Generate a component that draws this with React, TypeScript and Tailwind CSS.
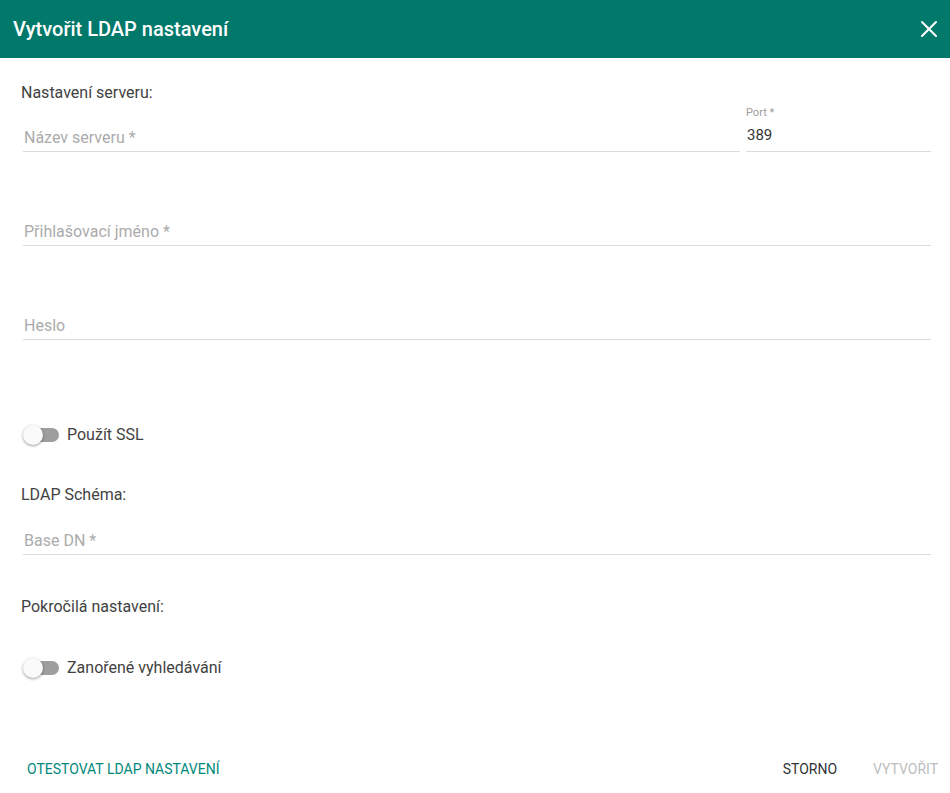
import { X } from "lucide-react";

function Field({
  label,
  value,
  className = "",
}: {
  label: string;
  value?: string;
  className?: string;
}) {
  return (
    <div className={`h-[49px] border-b border-[#dcdcdc] ${className}`}>
      {value ? (
        <>
          <div className="h-[17px] pt-[3px] text-[11px] leading-[14px] text-[#9e9e9e]">{label}</div>
          <div className="h-[31px] pt-[5px] pl-px text-[15px] leading-[20px] text-[#333]">{value}</div>
        </>
      ) : (
        <div className="pt-[25px] pl-px text-[16px] leading-[20px] text-[#ababab]">{label}</div>
      )}
    </div>
  );
}

function Toggle({ label }: { label: string }) {
  return (
    <div className="flex h-[24px] items-center">
      <div className="relative h-[20px] w-[36px]">
        <div className="absolute left-[2px] top-[3px] h-[14px] w-[34px] rounded-full bg-[#9e9e9e]" />
        <div className="absolute left-0 top-0 h-[20px] w-[20px] rounded-full bg-[#fafafa] shadow-[0_1px_3px_rgba(0,0,0,0.4)]" />
      </div>
      <span className="ml-[8px] text-[16px] text-[#424242]">{label}</span>
    </div>
  );
}

export default function App() {
  return (
    <div
      className="h-[793px] w-[950px] bg-white"
      style={{ fontFamily: "Roboto, 'Noto Sans', sans-serif" }}
    >
      {/* Header */}
      <header className="flex h-[58px] items-center justify-between bg-[#00786a] pl-[13px] pr-[7px]">
        <h1 className="text-[20px] font-medium text-white">Vytvořit LDAP nastavení</h1>
        <X className="h-[28px] w-[28px] text-white" strokeWidth={1.75} />
      </header>

      {/* Body */}
      <main className="pl-[21px] pr-[19px]">
        <div className="mt-[25px] h-[20px] text-[16px] leading-[20px] text-[#424242]">Nastavení serveru:</div>

        <div className="ml-[2px] flex gap-[6px]">
          <Field label="Název serveru *" className="flex-1" />
          <Field label="Port *" value="389" className="w-[185px]" />
        </div>

        <Field label="Přihlašovací jméno *" className="ml-[2px] mt-[45px]" />
        <Field label="Heslo" className="ml-[2px] mt-[45px]" />

        <div className="ml-[2px] mt-[83px]">
          <Toggle label="Použít SSL" />
        </div>

        <div className="mt-[38px] h-[20px] text-[16px] leading-[20px] text-[#424242]">LDAP Schéma:</div>
        <Field label="Base DN *" className="ml-[2px] mt-px" />

        <div className="mt-[42px] h-[20px] text-[16px] leading-[20px] text-[#424242]">Pokročilá nastavení:</div>
        <div className="ml-[2px] mt-[39px]">
          <Toggle label="Zanořené vyhledávání" />
        </div>
      </main>

      {/* Footer */}
      <footer className="mt-[71px] flex h-[36px] items-center justify-between pl-[27px] pr-[12px]">
        <button className="text-[14px] uppercase text-[#00897b]">Otestovat LDAP nastavení</button>
        <div className="flex items-center gap-[36px]">
          <button className="text-[14px] uppercase text-[#333]">Storno</button>
          <button className="text-[14px] uppercase text-[#bdbdbd]">Vytvořit</button>
        </div>
      </footer>
    </div>
  );
}
